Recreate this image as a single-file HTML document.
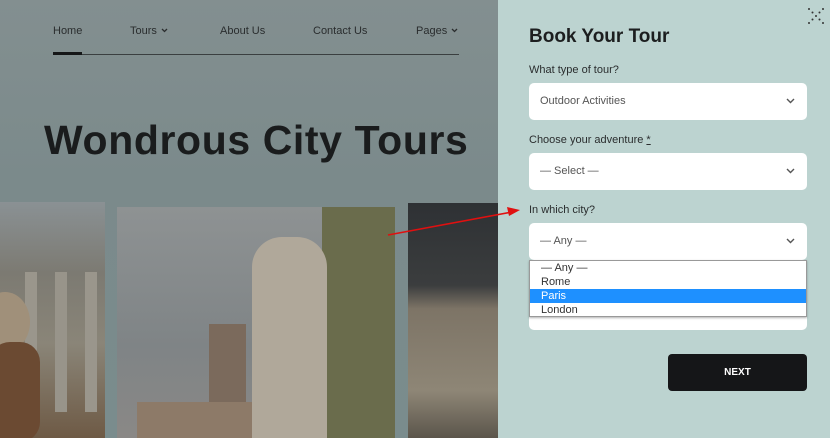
<!DOCTYPE html>
<html><head><meta charset="utf-8"><style>
*{margin:0;padding:0;box-sizing:border-box}
body{width:830px;height:438px;overflow:hidden;position:relative;font-family:"Liberation Sans",sans-serif;background:#7e8b8c}
.left{position:absolute;left:0;top:0;width:498px;height:438px;background:linear-gradient(180deg,#838f90 0%,#7b8a8b 40%,#7a8c8d 100%)}
.nav{position:absolute;top:25px;font-size:11px;color:#2a2d2e}
.nav svg{margin-left:4px;vertical-align:1px}
.line{position:absolute;left:53px;top:54px;width:406px;height:1px;background:#3a3f40}
.act{position:absolute;left:53px;top:52px;width:29px;height:3px;background:#151718}
h1{position:absolute;left:44px;top:117px;font-size:41px;font-weight:bold;color:#1a1c1d;letter-spacing:0.6px}
.img{position:absolute;overflow:hidden}
.panel{position:absolute;left:498px;top:0;width:332px;height:438px;background:#bcd3d0}
.lbl{position:absolute;left:529px;font-size:11px;color:#2a2d2e}
.sel{position:absolute;left:529px;width:278px;height:37px;background:#fff;border-radius:5px;font-size:11px;color:#555;padding:12px 11px}
.chev{position:absolute;right:12px;top:15px}
.dd{position:absolute;left:529px;top:260px;width:278px;height:57px;background:#fff;border:1px solid #999;font-size:11px;color:#333;box-shadow:0 1px 2px rgba(0,0,0,.3)}
.dd div{height:14px;line-height:14px;padding-left:11px}
</style></head><body>
<div class="left">
<div class="nav" style="left:53px">Home</div>
<div class="nav" style="left:130px">Tours<svg width="7" height="5"><path d="M1 1l2.5 2.5L6 1" stroke="#2a2d2e" stroke-width="1.3" fill="none"/></svg></div>
<div class="nav" style="left:220px">About Us</div>
<div class="nav" style="left:313px">Contact Us</div>
<div class="nav" style="left:416px">Pages<svg width="7" height="5"><path d="M1 1l2.5 2.5L6 1" stroke="#2a2d2e" stroke-width="1.3" fill="none"/></svg></div>
<div class="line"></div><div class="act"></div>
<h1>Wondrous City Tours</h1>
<div class="img" style="left:0;top:202px;width:105px;height:236px;background:linear-gradient(180deg,#8a9194 0%,#7c7a72 30%,#8a8578 60%,#6e5a45 100%)">
<div style="position:absolute;left:25px;top:70px;width:12px;height:140px;background:#9a968c"></div>
<div style="position:absolute;left:55px;top:70px;width:12px;height:140px;background:#98948a"></div>
<div style="position:absolute;left:85px;top:70px;width:12px;height:140px;background:#9a968c"></div>
<div style="position:absolute;left:-20px;top:90px;width:50px;height:60px;border-radius:50%;background:#a0907a"></div>
<div style="position:absolute;left:-10px;top:140px;width:50px;height:100px;background:#6b4a32;border-radius:20px"></div>
</div>
<div class="img" style="left:117px;top:207px;width:278px;height:231px;background:linear-gradient(180deg,#8e9293 0%,#7f8486 60%,#8a8886 100%)">
<div style="position:absolute;left:205px;top:0;width:73px;height:231px;background:#6a6c4c"></div>
<div style="position:absolute;left:92px;top:117px;width:37px;height:120px;background:#7b6a5c"></div>
<div style="position:absolute;left:20px;top:195px;width:140px;height:40px;background:#8d7a68"></div>
<div style="position:absolute;left:135px;top:30px;width:75px;height:210px;background:#b0a89a;border-radius:30px 30px 0 0"></div>
</div>
<div class="img" style="left:408px;top:203px;width:90px;height:235px;background:linear-gradient(180deg,#2e3134 0%,#3b3d3e 35%,#7d7466 45%,#8e8676 80%,#5b554b 100%)"></div>
</div>
<div class="panel"></div>
<svg style="position:absolute;left:380px;top:200px" width="150" height="45"><line x1="8" y1="35" x2="132" y2="12" stroke="#e01010" stroke-width="1.6"/><polygon points="140,10 127,7 129,16" fill="#e01010"/></svg>
<svg style="position:absolute;left:807px;top:7px" width="18" height="18" fill="#333"><circle cx="2" cy="2" r="1"/><circle cx="16" cy="2" r="1"/><circle cx="5.5" cy="5.5" r="1"/><circle cx="12.5" cy="5.5" r="1"/><circle cx="9" cy="9" r="1"/><circle cx="5.5" cy="12.5" r="1"/><circle cx="12.5" cy="12.5" r="1"/><circle cx="2" cy="16" r="1"/><circle cx="16" cy="16" r="1"/></svg>
<div style="position:absolute;left:529px;top:26px;font-size:19px;font-weight:bold;color:#1c1e1f">Book Your Tour</div>
<div class="lbl" style="top:64px">What type of tour?</div>
<div class="sel" style="top:83px">Outdoor Activities<svg class="chev" width="9" height="6"><path d="M1 1l3.5 3.5L8 1" stroke="#555" stroke-width="1.4" fill="none"/></svg></div>
<div class="lbl" style="top:134px">Choose your adventure <u>*</u></div>
<div class="sel" style="top:153px">— Select —<svg class="chev" width="9" height="6"><path d="M1 1l3.5 3.5L8 1" stroke="#555" stroke-width="1.4" fill="none"/></svg></div>
<div class="lbl" style="top:204px">In which city?</div>
<div class="sel" style="top:223px">— Any —<svg class="chev" width="9" height="6"><path d="M1 1l3.5 3.5L8 1" stroke="#555" stroke-width="1.4" fill="none"/></svg></div>
<div class="sel" style="top:293px;height:37px"></div>
<div class="dd"><div>— Any —</div><div>Rome</div><div style="background:#1e90ff;color:#fff">Paris</div><div>London</div></div>
<div style="position:absolute;left:668px;top:354px;width:139px;height:37px;background:#151618;border-radius:4px;color:#fff;font-size:10px;font-weight:bold;text-align:center;line-height:37px">NEXT</div>
</body></html>
